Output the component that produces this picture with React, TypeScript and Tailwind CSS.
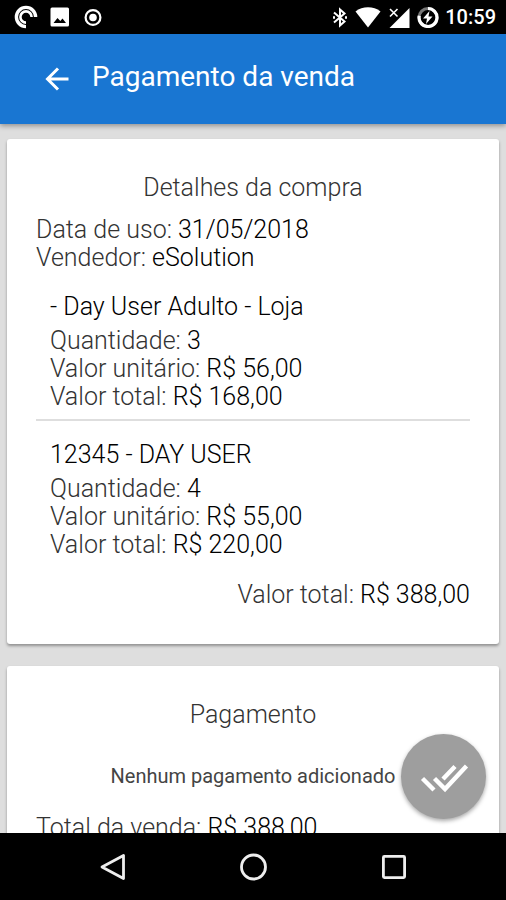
import type { ReactNode } from 'react';

interface SaleItem {
  name: string;
  quantity: number;
  unitPrice: string;
  total: string;
}

const items: SaleItem[] = [
  { name: '- Day User Adulto - Loja', quantity: 3, unitPrice: 'R$ 56,00', total: 'R$ 168,00' },
  { name: '12345 - DAY USER', quantity: 4, unitPrice: 'R$ 55,00', total: 'R$ 220,00' },
];

function StatusBar() {
  return (
    <div className="flex h-[34px] shrink-0 items-center justify-between bg-black pr-[10px] pl-[14px] text-white">
      <div className="flex items-center gap-3">
        <svg className="h-6 w-6" viewBox="0 0 24 24" fill="none" stroke="currentColor" aria-hidden="true">
          <path d="M21.6 12A9.6 9.6 0 1 0 12 21.6" strokeWidth="3.4" />
          <path d="M17.6 12A5.6 5.6 0 1 0 12 17.6" strokeWidth="2.6" />
        </svg>
        <svg className="h-5 w-5" viewBox="0 0 20 20" fill="currentColor" aria-hidden="true">
          <path
            fillRule="evenodd"
            d="M2 .5h15.500a1.500 1.500 0 0 1 1.500 1.500v16a1.500 1.500 0 0 1-1.500 1.500H2A1.500 1.500 0 0 1 .5 18V2A1.500 1.500 0 0 1 2 .5ZM3.500 16h12.500l-3.500-4.500-2.200 2.600-2.800-3.100Z"
          />
        </svg>
        <svg className="h-5 w-5" viewBox="0 0 20 20" aria-hidden="true">
          <circle cx="11" cy="10.5" r="7.4" fill="none" stroke="currentColor" strokeWidth="2.2" />
          <circle cx="11" cy="10.5" r="3.8" fill="currentColor" />
        </svg>
      </div>

      <div className="flex items-center">
        <svg className="mr-[7px] h-[22px] w-4" viewBox="0 0 16 22" fill="none" stroke="currentColor" strokeWidth="2" aria-hidden="true">
          <path d="m2 6.500 10.500 9L8 19.500v-16l4.500 4L2 16.500" />
          <path d="M1 11.500h2M13 11.500h2" strokeWidth="2.400" />
        </svg>
        <svg className="mr-[7px] h-[22px] w-[26px]" viewBox="0 0 26 22" fill="currentColor" aria-hidden="true">
          <path d="M13 21.500 .5 5.500C4 2.700 8.500 1.300 13 1.300S22 2.700 25.500 5.500Z" />
        </svg>
        <svg className="mr-[7px] h-[22px] w-[22px]" viewBox="0 0 22 22" fill="currentColor" aria-hidden="true">
          <path d="M21.500 2v20h-20Z" />
          <path d="M0 0h11v10.500L9 12 0 12Z" fill="#000" />
          <path d="m2 3 7.500 7.500m0-7.500L2 10.500" fill="none" stroke="currentColor" strokeWidth="1.6" />
        </svg>
        <svg className="mr-[6px] h-[22px] w-[22px]" viewBox="0 0 22 22" fill="none" aria-hidden="true">
          <circle cx="11" cy="11.5" r="9" stroke="#777" strokeWidth="3" />
          <path d="M11 2.500a9 9 0 1 1-8.800 7.200" stroke="currentColor" strokeWidth="3.2" />
          <path d="m12.500 5-6.500 7.500h4l-1 5.500 6.500-7.500h-4Z" fill="currentColor" />
        </svg>
        <span className="text-[20px] leading-6 font-medium">10:59</span>
      </div>
    </div>
  );
}

function AppBar() {
  return (
    <header className="z-10 flex h-[90px] shrink-0 items-center bg-[#1976d2] pl-[41px] text-white shadow-[0_2px_5px_rgba(0,0,0,0.35)]">
      <button type="button" aria-label="Voltar" className="mr-[19px]">
        <svg className="h-8 w-8" viewBox="0 0 32 32" fill="none" stroke="currentColor" strokeWidth="3" aria-hidden="true">
          <path d="M27.500 16H6M17 5.500 6.500 16 17 26.500" />
        </svg>
      </button>
      <h1 className="pb-1 text-[28px] leading-8">Pagamento da venda</h1>
    </header>
  );
}

function Card({ title, children }: { title: string; children: ReactNode }) {
  return (
    <section className="rounded-[3px] bg-white px-[29px] py-[35px] shadow-[0_2px_3px_rgba(0,0,0,0.35)]">
      <h2 className="text-center text-[#333]">{title}</h2>
      {children}
    </section>
  );
}

function Field({ label, value }: { label: string; value: string | number }) {
  return (
    <p className="text-black">
      <span className="text-[#333]">{label}:</span> {value}
    </p>
  );
}

function BottomNav() {
  return (
    <nav className="grid h-[67px] shrink-0 grid-cols-3 items-center justify-items-center bg-black px-[43px] text-[#eee]">
      <button type="button" aria-label="Voltar do sistema">
        <svg className="h-8 w-8" viewBox="0 0 32 32" fill="none" stroke="currentColor" strokeWidth="2.8" strokeLinejoin="round" aria-hidden="true">
          <path d="M26.500 4.500v23L5 16Z" />
        </svg>
      </button>
      <button type="button" aria-label="Início">
        <svg className="h-8 w-8" viewBox="0 0 32 32" fill="none" stroke="currentColor" strokeWidth="2.8" aria-hidden="true">
          <circle cx="16.5" cy="16" r="12" />
        </svg>
      </button>
      <button type="button" aria-label="Recentes">
        <svg className="h-8 w-8" viewBox="0 0 32 32" fill="none" stroke="currentColor" strokeWidth="2.8" aria-hidden="true">
          <rect x="6.4" y="5.4" width="21.2" height="21.2" rx="1" />
        </svg>
      </button>
    </nav>
  );
}

export default function App() {
  return (
    <div className="flex h-screen flex-col font-[Roboto,sans-serif]">
      <StatusBar />
      <AppBar />

      <div className="relative min-h-0 flex-1">
        <main className="flex h-full flex-col gap-[22px] overflow-hidden bg-[#dedede] px-[7px] pt-[15px] text-[25px] leading-7 font-light">
          <Card title="Detalhes da compra">
            <div className="mt-[14px]">
              <Field label="Data de uso" value="31/05/2018" />
              <Field label="Vendedor" value="eSolution" />
            </div>

            <ul className="mt-[21px] divide-y-2 divide-[#dedede]">
              {items.map((item) => (
                <li key={item.name} className="pb-2 pl-[14px] not-first:pt-5">
                  <h3 className="mb-[6px] text-black">{item.name}</h3>
                  <Field label="Quantidade" value={item.quantity} />
                  <Field label="Valor unitário" value={item.unitPrice} />
                  <Field label="Valor total" value={item.total} />
                </li>
              ))}
            </ul>

            <div className="mt-[14px] text-right">
              <Field label="Valor total" value="R$ 388,00" />
            </div>
          </Card>

          <Card title="Pagamento">
            <p className="mt-[35px] mb-[26px] text-center text-[20px] leading-6 font-normal text-[#444]">
              Nenhum pagamento adicionado
            </p>
            <Field label="Total da venda" value="R$ 388,00" />
          </Card>
        </main>

        <button
          type="button"
          aria-label="Confirmar pagamento"
          className="absolute right-5 bottom-[14px] grid h-[85px] w-[85px] place-items-center rounded-full bg-[#9e9e9e] text-white shadow-[0_2px_4px_rgba(0,0,0,0.35)]"
        >
          <svg className="h-[50px] w-[50px]" viewBox="0 0 50 50" fill="none" stroke="currentColor" strokeWidth="4.4" aria-hidden="true">
            <path d="m3.500 26.500 11.500 11.500M15.500 26.500l10.500 10.500L47.500 14M24 27l12-12.500" />
          </svg>
        </button>
      </div>

      <BottomNav />
    </div>
  );
}
